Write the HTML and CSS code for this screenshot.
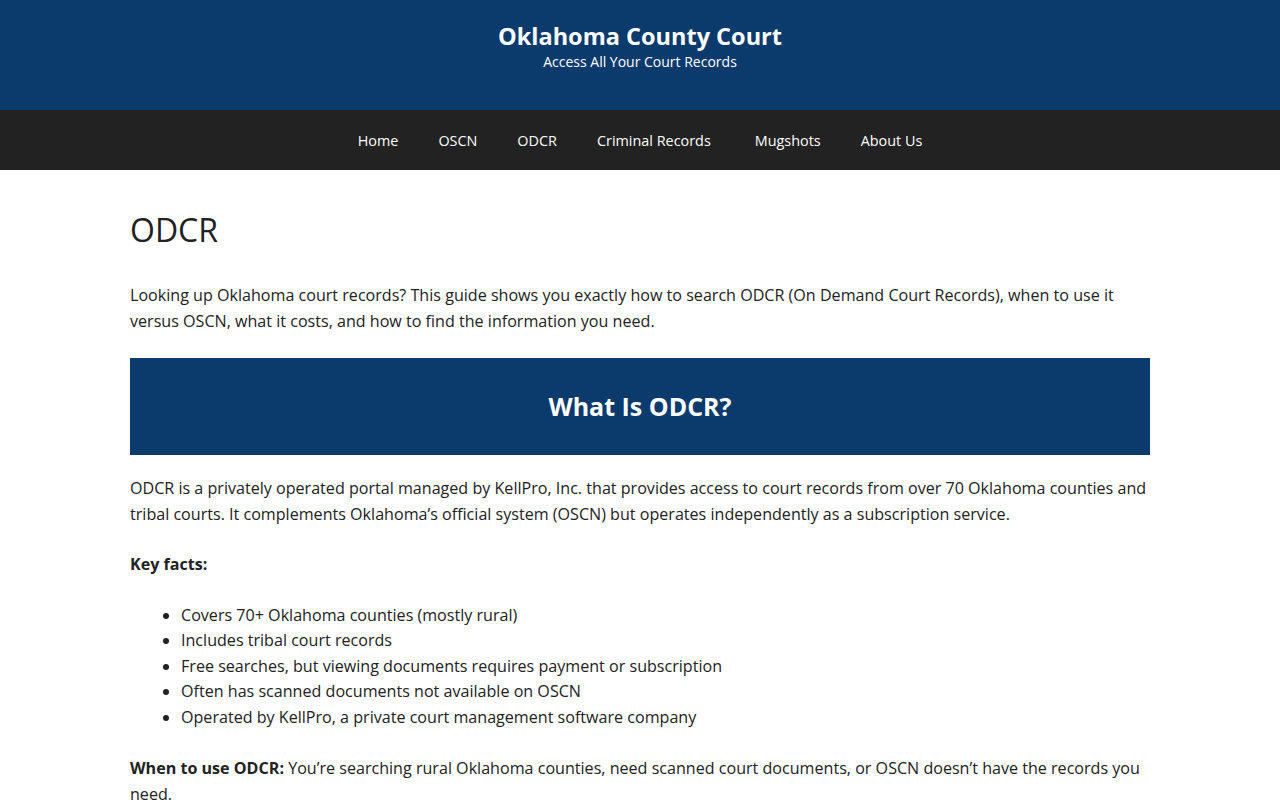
FILE: index.html
```html
<!DOCTYPE html>
<html lang="en">
<head>
<meta charset="utf-8">
<title>ODCR - Oklahoma County Court</title>
<link rel="stylesheet" href="styles.css">
</head>
<body>
<header class="site-header">
  <div class="site-title">Oklahoma County Court</div>
  <div class="site-tagline">Access All Your Court Records</div>
</header>
<nav class="main-nav">
  <ul class="nav-list">
    <li><a href="#">Home</a></li>
    <li><a href="#">OSCN</a></li>
    <li><a href="#">ODCR</a></li>
    <li class="has-sub"><a href="#">Criminal Records</a></li>
    <li><a href="#">Mugshots</a></li>
    <li><a href="#">About Us</a></li>
  </ul>
</nav>
<main class="content">
  <h1 class="page-title">ODCR</h1>
  <p>Looking up Oklahoma court records? This guide shows you exactly how to search ODCR (On Demand Court Records), when to use it versus OSCN, what it costs, and how to find the information you need.</p>
  <h2 class="section-banner">What Is ODCR?</h2>
  <p>ODCR is a privately operated portal managed by KellPro, Inc. that provides access to court records from over 70 Oklahoma counties and tribal courts. It complements Oklahoma’s official system (OSCN) but operates independently as a subscription service.</p>
  <p><strong>Key facts:</strong></p>
  <ul class="facts">
    <li>Covers 70+ Oklahoma counties (mostly rural)</li>
    <li>Includes tribal court records</li>
    <li>Free searches, but viewing documents requires payment or subscription</li>
    <li>Often has scanned documents not available on OSCN</li>
    <li>Operated by KellPro, a private court management software company</li>
  </ul>
  <p><strong>When to use ODCR:</strong> You’re searching rural Oklahoma counties, need scanned court documents, or OSCN doesn’t have the records you need.</p>
</main>
</body>
</html>
```
FILE: styles.css
```css
html, body {
  margin: 0;
  padding: 0;
}
body {
  font-family: "Open Sans", "Noto Sans", "DejaVu Sans", sans-serif;
  color: #222222;
  background: #ffffff;
}
.site-header {
  background: #0b3a6d;
  color: #ffffff;
  height: 110px;
  box-sizing: border-box;
  padding-top: 20px;
  text-align: center;
}
.site-title {
  font-size: 23.5px;
  font-weight: 700;
  line-height: 32px;
}
.site-tagline {
  font-size: 14px;
  line-height: 20px;
}
.main-nav {
  background: #222222;
  height: 60px;
}
.nav-list {
  list-style: none;
  margin: 0;
  padding: 0;
  display: flex;
  justify-content: center;
  height: 60px;
  align-items: center;
}
.nav-list li {
  padding: 0 20px;
}
.nav-list li.has-sub {
  padding-right: 24px;
}
.nav-list a {
  color: #ffffff;
  text-decoration: none;
  font-size: 14.4px;
}
.content {
  width: 1020px;
  margin: 0 auto;
  padding-top: 40px;
  font-size: 16.1px;
  line-height: 25.5px;
}
.page-title {
  font-size: 32px;
  font-weight: 400;
  line-height: 40px;
  margin: 0 0 33px;
}
.content p {
  margin: 0 0 25px;
}
.section-banner {
  background: #0b3a6d;
  color: #ffffff;
  text-align: center;
  font-size: 25px;
  font-weight: 700;
  margin: -1px 0 21px;
  height: 97px;
  line-height: 97px;
}
.facts {
  margin: 0 0 26px;
  padding-left: 51px;
}
```
